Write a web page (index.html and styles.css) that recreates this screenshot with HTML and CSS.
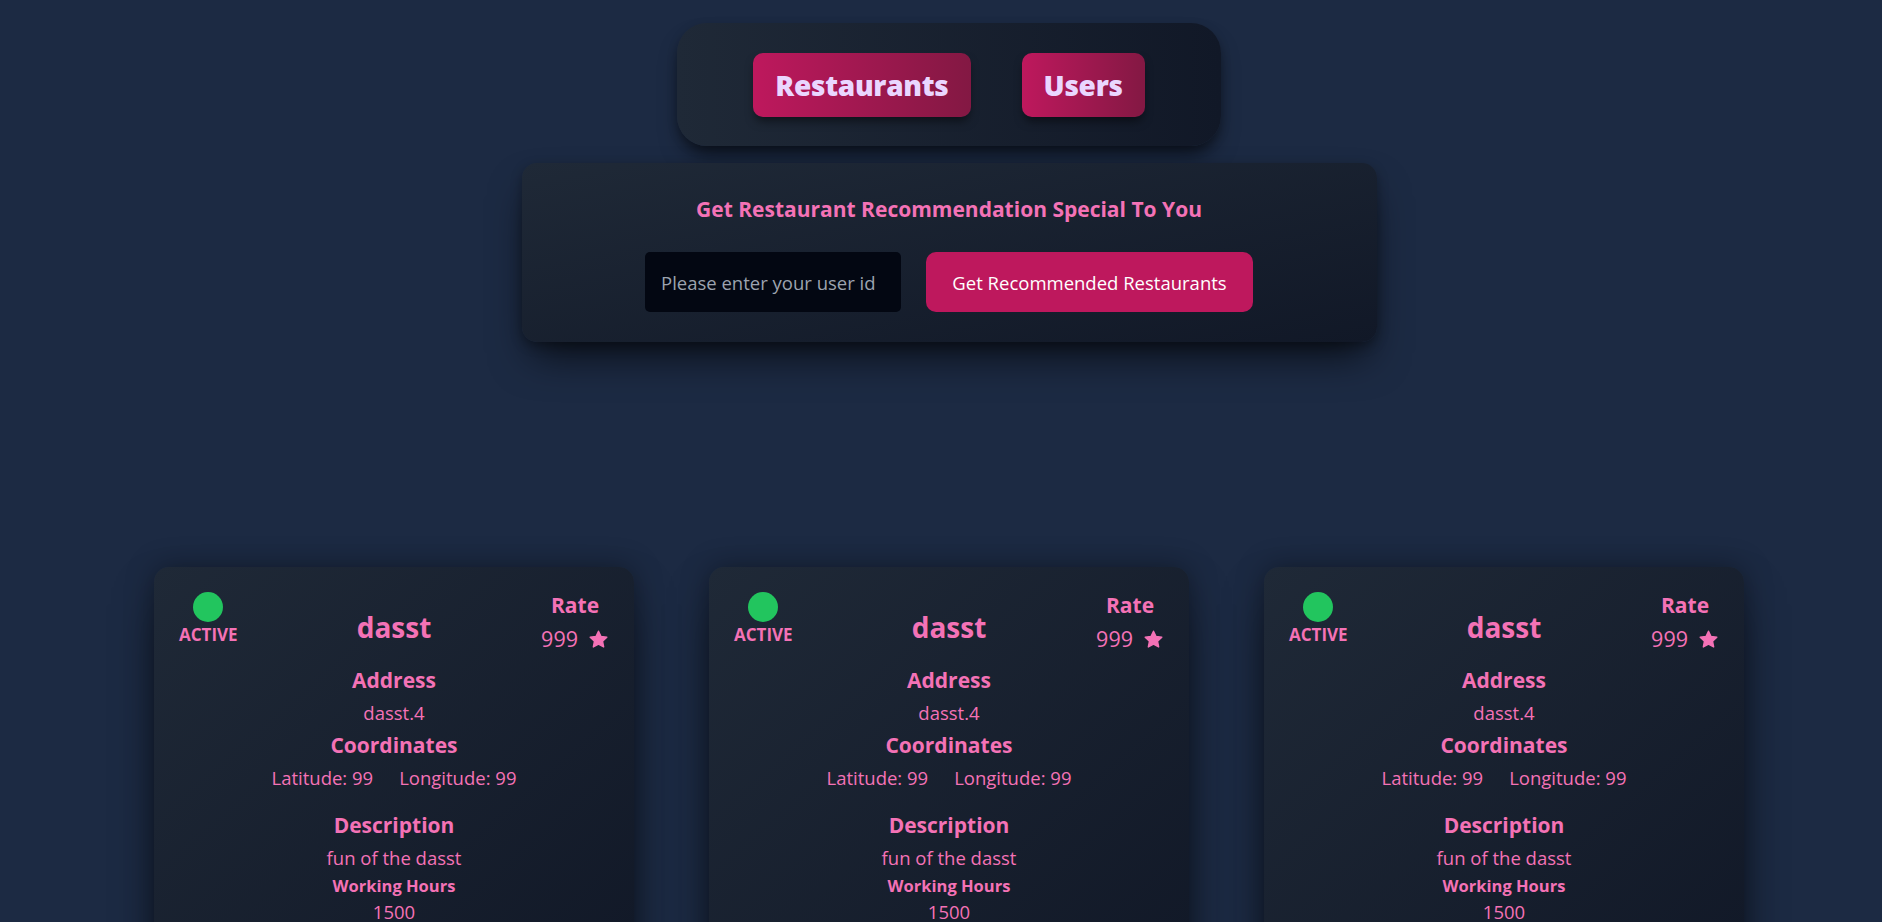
FILE: index.html
```html
<!DOCTYPE html>
<html lang="en">
<head>
<meta charset="utf-8">
<title>Restaurants</title>
<link rel="stylesheet" href="styles.css">
</head>
<body>
<div class="page">
  <nav class="nav">
    <button class="nav-btn">Restaurants</button>
    <button class="nav-btn">Users</button>
  </nav>

  <section class="rec">
    <h2 class="rec-title">Get Restaurant Recommendation Special To You</h2>
    <div class="rec-form">
      <input class="rec-input" type="text" placeholder="Please enter your user id">
      <button class="rec-btn">Get Recommended Restaurants</button>
    </div>
  </section>

  <div class="cards">
    <article class="card">
      <div class="card-top">
        <div class="status">
          <span class="dot"></span>
          <span class="status-text">ACTIVE</span>
        </div>
        <h3 class="name">dasst</h3>
        <div class="rate">
          <span class="rate-label">Rate</span>
          <span class="rate-value">999 <svg class="star" viewBox="0 0 24 24"><polygon points="12,2.5 14.9,8.6 21.5,9.4 16.6,13.9 17.9,20.5 12,17.2 6.1,20.5 7.4,13.9 2.5,9.4 9.1,8.6"/></svg></span>
        </div>
      </div>
      <div class="card-body">
        <h4 class="label">Address</h4>
        <p class="value">dasst.4</p>
        <h4 class="label">Coordinates</h4>
        <p class="value coords"><span>Latitude: 99</span><span>Longitude: 99</span></p>
        <h4 class="label label-gap">Description</h4>
        <p class="value">fun of the dasst</p>
        <h5 class="small-label">Working Hours</h5>
        <p class="value">1500</p>
      </div>
    </article>

    <article class="card">
      <div class="card-top">
        <div class="status">
          <span class="dot"></span>
          <span class="status-text">ACTIVE</span>
        </div>
        <h3 class="name">dasst</h3>
        <div class="rate">
          <span class="rate-label">Rate</span>
          <span class="rate-value">999 <svg class="star" viewBox="0 0 24 24"><polygon points="12,2.5 14.9,8.6 21.5,9.4 16.6,13.9 17.9,20.5 12,17.2 6.1,20.5 7.4,13.9 2.5,9.4 9.1,8.6"/></svg></span>
        </div>
      </div>
      <div class="card-body">
        <h4 class="label">Address</h4>
        <p class="value">dasst.4</p>
        <h4 class="label">Coordinates</h4>
        <p class="value coords"><span>Latitude: 99</span><span>Longitude: 99</span></p>
        <h4 class="label label-gap">Description</h4>
        <p class="value">fun of the dasst</p>
        <h5 class="small-label">Working Hours</h5>
        <p class="value">1500</p>
      </div>
    </article>

    <article class="card">
      <div class="card-top">
        <div class="status">
          <span class="dot"></span>
          <span class="status-text">ACTIVE</span>
        </div>
        <h3 class="name">dasst</h3>
        <div class="rate">
          <span class="rate-label">Rate</span>
          <span class="rate-value">999 <svg class="star" viewBox="0 0 24 24"><polygon points="12,2.5 14.9,8.6 21.5,9.4 16.6,13.9 17.9,20.5 12,17.2 6.1,20.5 7.4,13.9 2.5,9.4 9.1,8.6"/></svg></span>
        </div>
      </div>
      <div class="card-body">
        <h4 class="label">Address</h4>
        <p class="value">dasst.4</p>
        <h4 class="label">Coordinates</h4>
        <p class="value coords"><span>Latitude: 99</span><span>Longitude: 99</span></p>
        <h4 class="label label-gap">Description</h4>
        <p class="value">fun of the dasst</p>
        <h5 class="small-label">Working Hours</h5>
        <p class="value">1500</p>
      </div>
    </article>
  </div>
</div>
</body>
</html>
```

FILE: styles.css
```css
* {
  box-sizing: border-box;
}

html, body {
  margin: 0;
  padding: 0;
}

body {
  background: #1c2a43;
  font-family: "Open Sans", "Noto Sans", sans-serif;
  color: #f472b6;
  overflow: hidden;
  height: 922px;
}

.page {
  display: flex;
  flex-direction: column;
  align-items: center;
  padding: 23px 0 0 16px;
}

/* ---------- top navigation ---------- */
.nav {
  width: 544px;
  height: 123px;
  display: flex;
  justify-content: center;
  align-items: center;
  gap: 51px;
  border-radius: 30px;
  background: linear-gradient(to right, #1f2937, #111827);
  box-shadow: 0 14px 22px -6px rgba(0, 0, 0, 0.55), 0 4px 10px rgba(0, 0, 0, 0.25);
  padding-top: 1px;
}

.nav-btn {
  height: 64px;
  padding: 0 22px;
  border: none;
  border-radius: 10px;
  background: linear-gradient(to right, #be185d, #831843);
  color: #ead6ff;
  font-family: "Open Sans", "Noto Sans", sans-serif;
  font-size: 28px;
  font-weight: 800;
  letter-spacing: -0.3px;
  box-shadow: 0 6px 10px -2px rgba(0, 0, 0, 0.5);
  cursor: pointer;
}

/* ---------- recommendation box ---------- */
.rec {
  margin-top: 17px;
  width: 855px;
  height: 179px;
  padding: 31px 30px 30px;
  border-radius: 15px;
  background: linear-gradient(to bottom right, #1f2937, #111827);
  box-shadow: 0 22px 40px -10px rgba(0, 0, 0, 0.7), 0 4px 12px rgba(0, 0, 0, 0.3);
  text-align: center;
}

.rec-title {
  margin: 0;
  font-size: 21px;
  line-height: 30px;
  font-weight: 700;
  color: #f472b6;
}

.rec-form {
  margin-top: 28px;
  display: flex;
  justify-content: center;
  gap: 25px;
}

.rec-input {
  width: 256px;
  height: 60px;
  padding: 0 16px;
  border: none;
  border-radius: 5px;
  background: #030712;
  color: #e5e7eb;
  font-family: "Open Sans", "Noto Sans", sans-serif;
  font-size: 18.5px;
  outline: none;
}

.rec-input::placeholder {
  color: #9ca3af;
}

.rec-btn {
  width: 327px;
  height: 60px;
  border: none;
  border-radius: 10px;
  background: #be185d;
  color: #ffffff;
  font-family: "Open Sans", "Noto Sans", sans-serif;
  font-size: 18.5px;
  cursor: pointer;
}

/* ---------- cards ---------- */
.cards {
  margin-top: 225px;
  display: flex;
  gap: 75px;
}

.card {
  width: 480px;
  height: 420px;
  padding: 25px;
  border-radius: 15px;
  background: linear-gradient(to bottom right, #1f2937, #111827);
  box-shadow: 0 25px 50px -12px rgba(0, 0, 0, 0.6), 0 0 28px rgba(0, 0, 0, 0.35);
}

.card-top {
  display: grid;
  grid-template-columns: 1fr 1fr 1fr;
  align-items: start;
  height: 72px;
}

.status {
  justify-self: start;
  display: flex;
  flex-direction: column;
  align-items: center;
}

.dot {
  width: 30px;
  height: 30px;
  border-radius: 50%;
  background: #22c55e;
}

.status-text {
  margin-top: 2px;
  font-size: 17px;
  line-height: 22px;
  font-weight: 700;
}

.name {
  margin: 17px 0 0;
  text-align: center;
  font-size: 28px;
  line-height: 36px;
  font-weight: 700;
}

.rate {
  justify-self: end;
  display: flex;
  flex-direction: column;
  align-items: center;
}

.rate-label {
  font-size: 21px;
  line-height: 26px;
  font-weight: 700;
}

.rate-value {
  margin-top: 6px;
  display: flex;
  align-items: center;
  gap: 10px;
  font-size: 21.5px;
  line-height: 30px;
}

.star {
  width: 21px;
  height: 21px;
  fill: #f472b6;
  stroke: #f472b6;
  stroke-width: 1.6;
  stroke-linejoin: round;
}

.card-body {
  text-align: center;
}

.label {
  margin: 0;
  font-size: 21px;
  line-height: 32.5px;
  font-weight: 700;
}

.label-gap {
  margin-top: 15px;
}

.value {
  margin: 0;
  font-size: 18.5px;
  line-height: 32.5px;
}

.coords {
  display: flex;
  justify-content: center;
  gap: 26px;
}

.small-label {
  margin: 0;
  font-size: 16.5px;
  line-height: 23px;
  font-weight: 700;
}

.small-label + .value {
  line-height: 30px;
}
```
